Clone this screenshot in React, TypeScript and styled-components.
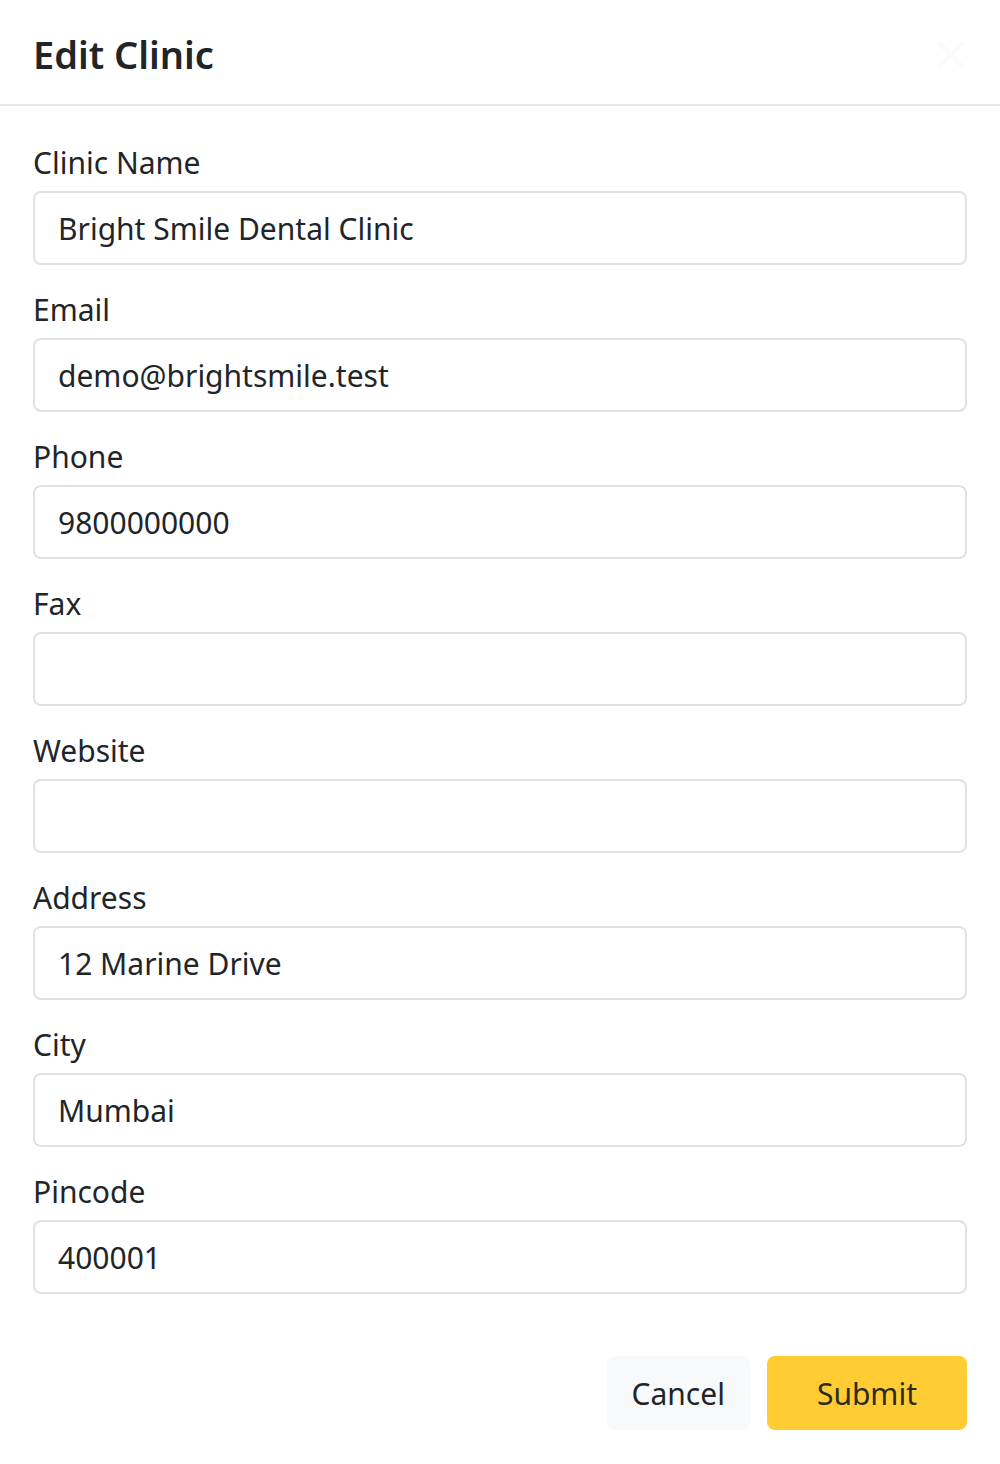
import React, { useState } from "react";
import styled, { createGlobalStyle } from "styled-components";

const GlobalStyle = createGlobalStyle`
  html, body {
    margin: 0;
    padding: 0;
    background: #ffffff;
  }
  body {
    font-family: "Segoe UI", "Noto Sans", "Open Sans", sans-serif;
    color: #212529;
  }
  * {
    box-sizing: border-box;
  }
`;

interface Field {
  id: string;
  label: string;
  value: string;
}

const initialFields: Field[] = [
  { id: "name", label: "Clinic Name", value: "Bright Smile Dental Clinic" },
  { id: "email", label: "Email", value: "demo@brightsmile.test" },
  { id: "phone", label: "Phone", value: "9800000000" },
  { id: "fax", label: "Fax", value: "" },
  { id: "website", label: "Website", value: "" },
  { id: "address", label: "Address", value: "12 Marine Drive" },
  { id: "city", label: "City", value: "Mumbai" },
  { id: "pincode", label: "Pincode", value: "400001" },
];

const App = () => {
  const [fields, setFields] = useState<Field[]>(initialFields);

  const handleChange = (id: string, value: string) => {
    setFields((p) => p.map((f) => (f.id === id ? { ...f, value } : f)));
  };

  const handleSubmit = (e: React.FormEvent<HTMLFormElement>) => {
    e.preventDefault();
  };

  return (
    <>
      <GlobalStyle />
      <Modal>
        <Header>
          <Title>Edit Clinic</Title>
          <CloseButton type="button" aria-label="Close">
            <svg width="32" height="32" viewBox="0 0 16 16">
              <path d="M2 2 L14 14 M14 2 L2 14" stroke="#000" strokeWidth="2" />
            </svg>
          </CloseButton>
        </Header>
        <form onSubmit={handleSubmit}>
          <Body>
            {fields.map((f) => (
              <Group key={f.id}>
                <Label htmlFor={f.id}>{f.label}</Label>
                <Input
                  id={f.id}
                  value={f.value}
                  onChange={(e) => handleChange(f.id, e.target.value)}
                />
              </Group>
            ))}
          </Body>
          <Footer>
            <Button type="button" $variant="light">Cancel</Button>
            <Button type="submit" $variant="warning">Submit</Button>
          </Footer>
        </form>
      </Modal>
    </>
  );
};

export default App;

const Modal = styled.div`
  width: 1000px;
  background: #fff;
`;

const Header = styled.div`
  height: 106px;
  display: flex;
  align-items: center;
  justify-content: space-between;
  padding: 6px 33px 0 33px;
  border-bottom: 2px solid #e6e8eb;
`;

const Title = styled.h5`
  margin: 0;
  font-size: 38px;
  font-weight: 600;
  line-height: 1.2;
  color: #212529;
`;

const CloseButton = styled.button`
  width: 32px;
  height: 32px;
  padding: 0;
  border: none;
  background: transparent;
  opacity: 0.01;
  display: flex;
  align-items: center;
  justify-content: center;
`;

const Body = styled.div`
  display: flex;
  flex-direction: column;
  gap: 22px;
  padding: 34px 33px 0;
`;

const Group = styled.div`
  display: flex;
  flex-direction: column;
`;

const Label = styled.label`
  font-size: 30px;
  line-height: 46px;
  margin-bottom: 5px;
  color: #212529;
`;

const Input = styled.input`
  height: 74px;
  width: 100%;
  padding: 0 23px;
  font-family: inherit;
  font-size: 30px;
  color: #212529;
  background: #fff;
  border: 2px solid #dee2e6;
  border-radius: 8px;
  outline: none;
`;

const Footer = styled.div`
  display: flex;
  justify-content: flex-end;
  gap: 17px;
  padding: 62px 33px 34px;
`;

const Button = styled.button<{ $variant: "light" | "warning" }>`
  height: 74px;
  padding: 0 ${(p) => (p.$variant === "warning" ? "50px" : "25px")};
  font-family: inherit;
  font-size: 30px;
  line-height: 1.5;
  border: none;
  border-radius: 8px;
  cursor: pointer;
  color: ${(p) => (p.$variant === "warning" ? "#2d2a1f" : "#212529")};
  background: ${(p) => (p.$variant === "warning" ? "#ffcd33" : "#f8f9fa")};
`;
